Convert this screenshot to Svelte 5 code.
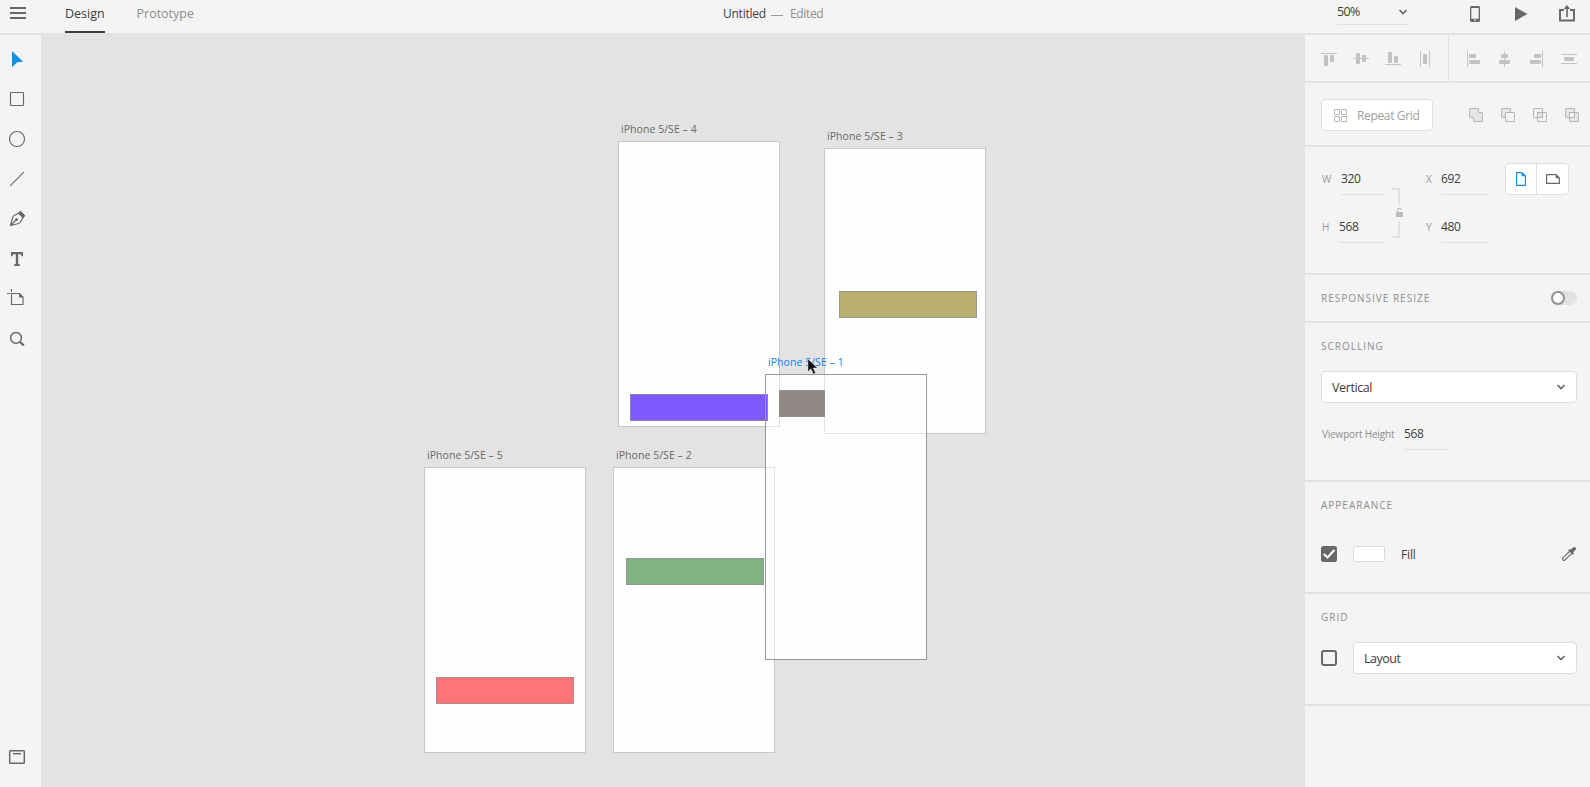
<script>
  const boards = [
    { n: 4, x: 577, y: 106 },
    { n: 3, x: 783, y: 113 },
    { n: 5, x: 383, y: 432 },
    { n: 2, x: 572, y: 432 }
  ];
  const bars = [
    { c: '#7e59ff', x: 589, y: 359, w: 138 },
    { c: '#b8ae70', x: 798, y: 256, w: 138 },
    { c: '#928684', x: 738, y: 355, w: 46 },
    { c: '#82b182', x: 585, y: 523, w: 138 },
    { c: '#ff7577', x: 395, y: 642, w: 138 }
  ];
</script>

{#snippet chevron()}
  <svg class="chev" width="10" height="8" viewBox="0 0 10 8"><path d="M1.5 2 5 5.5 8.5 2" fill="none" stroke="#686868" stroke-width="1.7" /></svg>
{/snippet}

<div class="app">
  <header>
    <svg class="burger" width="16" height="14" viewBox="0 0 16 14"><path d="M0 2h16M0 7h16M0 12h16" stroke="#686868" stroke-width="1.8" /></svg>
    <nav>
      <span class="tab on">Design</span>
      <span class="tab proto">Prototype</span>
    </nav>
    <div class="title"><b>Untitled</b><i></i><span>Edited</span></div>
    <div class="right">
      <div class="zoom"><span>50%</span>{@render chevron()}</div>
      <svg class="phone" width="10" height="16" viewBox="0 0 10 16"><path fill="#686868" fill-rule="evenodd" d="M1.5 0h7Q10 0 10 1.5v13Q10 16 8.5 16h-7Q0 16 0 14.500V1.500Q0 0 1.500 0ZM1.300 2v10.700h7.400V2ZM4.300 13.600v1.300h1.400v-1.300Z" /></svg>
      <svg class="play" width="13" height="14" viewBox="0 0 13 14"><path fill="#686868" d="M0 0 12.500 7 0 14Z" /></svg>
      <svg width="16" height="17" viewBox="0 0 16 17"><path d="M5 5H1v10.500h14V5h-4" fill="none" stroke="#686868" stroke-width="1.900" /><path d="M8 12V2" stroke="#686868" stroke-width="1.600" /><path d="M4.800 4 8 0l3.200 4Z" fill="#686868" /></svg>
    </div>
  </header>

  <main>
    <aside class="tools">
      <svg viewBox="0 0 24 24"><path fill="#1592e6" d="M7 4 18.200 14.800 12.300 15.200 7 20.200Z" /></svg>
      <svg viewBox="0 0 24 24"><rect x="5.500" y="5.500" width="13" height="13" rx=".8" class="ln" /></svg>
      <svg viewBox="0 0 24 24"><circle cx="12" cy="12" r="7.500" class="ln" /></svg>
      <svg viewBox="0 0 24 24"><path d="M5.200 18.800 18.800 5.200" class="ln" /></svg>
      <svg viewBox="0 0 24 24"><path d="M5.600 18.500 7.600 10.400Q8.200 9 9.600 8.300L13.700 6.300 18 10.600 15.700 14.600Q15 16 13.600 16.500ZM5.600 18.500 11 13" class="ln" /><circle cx="11.500" cy="12.500" r="1.500" fill="#686868" /><path fill="#686868" d="M13.200 6 15 4Q15.400 3.600 15.900 4L20 8.300Q20.400 8.800 20 9.200L18.200 11Z" /></svg>
      <svg viewBox="0 0 24 24"><path fill="#686868" d="M6 5h12v4.200h-1.500L16 7.200h-2.800v9.900l1.700.4V19H9.100v-1.500l1.700-.4V7.200H8L7.500 9.200H6Z" /></svg>
      <svg viewBox="0 0 24 24"><path d="M6.500 6.500H14.500L18 10V17.500H6.500ZM2 6.500h3M6.500 2v2.700" class="ln" /><path fill="#686868" d="M14 6.200 18.500 10.500H14Z" /></svg>
      <svg viewBox="0 0 24 24"><circle cx="11" cy="10.900" r="5.400" class="ln thick" /><path d="M15 14.900 18.800 18.500" stroke="#686868" stroke-width="2.200" /></svg>
      <svg class="last" viewBox="0 0 24 24"><rect x="4.700" y="5.700" width="14.600" height="12.600" rx=".8" class="ln thick" /><path d="M8 8.700h8" class="ln thick" /></svg>
    </aside>

    <section class="canvas">
      <div class="base"></div>
      {#each boards as b}
        <div class="board" style="left:{b.x}px;top:{b.y}px"></div>
        <span class="label" style="left:{b.x + 3}px;top:{b.y - 20}px">iPhone 5/SE – {b.n}</span>
      {/each}
      <div class="veil"></div>
      {#each bars as r}
        <div class="bar" style="left:{r.x}px;top:{r.y}px;width:{r.w}px;background-color:{r.c}"></div>
      {/each}
      <div class="board active"></div>
      <span class="label sel">iPhone 5/SE – 1</span>
      <svg class="cursor" width="11" height="17" viewBox="0 0 11 17"><path d="M1 1v12.500l3-2.800 2.300 5.300 2.200-1-2.300-5H10.300Z" fill="#111" stroke="#fff" stroke-opacity=".7" stroke-width=".5" /></svg>
    </section>

    <aside class="panel">
      <div class="sec align">
        <div class="grp">
          <svg viewBox="0 0 16 16"><path d="M0 2.500h16" class="g" /><rect x="3" y="4" width="4" height="11" rx="1" /><rect x="9" y="4" width="4" height="7" rx="1" /></svg>
          <svg viewBox="0 0 16 16"><path d="M0 7.500h16" class="g" /><rect x="3" y="2" width="4" height="11" rx="1" /><rect x="9" y="4" width="4" height="7" rx="1" /></svg>
          <svg viewBox="0 0 16 16"><path d="M0 13.500h16" class="g" /><rect x="3" y="1" width="4" height="11" rx="1" /><rect x="9" y="5" width="4" height="7" rx="1" /></svg>
          <svg viewBox="0 0 16 16"><path d="M3.500 0v16M12.500 0v16" class="g" /><rect x="6" y="3" width="4" height="10" rx="1" /></svg>
        </div>
        <div class="grp two">
          <svg viewBox="0 0 16 16"><path d="M2.500 0v16" class="g" /><rect x="4" y="3" width="7" height="4" rx="1" /><rect x="4" y="9" width="11" height="4" rx="1" /></svg>
          <svg viewBox="0 0 16 16"><path d="M7.500 0v16" class="g" /><rect x="4" y="3" width="7" height="4" rx="1" /><rect x="2" y="9" width="11" height="4" rx="1" /></svg>
          <svg viewBox="0 0 16 16"><path d="M13.500 0v16" class="g" /><rect x="5" y="3" width="7" height="4" rx="1" /><rect x="1" y="9" width="11" height="4" rx="1" /></svg>
          <svg viewBox="0 0 16 16"><path d="M0 3.500h16M0 12.500h16" class="g" /><rect x="3" y="6" width="10" height="4" rx="1" /></svg>
        </div>
      </div>

      <div class="sec repeat">
        <div class="rbtn">
          <svg width="13" height="13" viewBox="0 0 13 13"><g fill="none" stroke="#b5b5b5"><rect x=".5" y=".5" width="5" height="5" rx=".5" /><rect x="7.500" y=".5" width="5" height="5" rx=".5" /><rect x=".5" y="7.500" width="5" height="5" rx=".5" /><rect x="7.500" y="7.500" width="5" height="5" rx=".5" /></g></svg>
          <span>Repeat Grid</span>
        </div>
        <div class="bool">
          <svg viewBox="0 0 14 14"><path d="M1 .5h8q.5 0 .5.5v3.500h3.500q.5 0 .5.500v8q0 .5-.5.500h-8q-.5 0-.5-.5V9.500H1Q.5 9.500.5 9V1Q.5.5 1 .5Z" fill="#e5e5e5" /></svg>
          <svg viewBox="0 0 14 14"><path d="M4.500 9.500H1Q.5 9.500.5 9V1Q.5.5 1 .5H9q.5 0 .5.500v3.500" fill="#e5e5e5" /><rect x="4.500" y="4.500" width="9" height="9" rx=".5" fill="#f4f4f4" /></svg>
          <svg viewBox="0 0 14 14"><rect x=".5" y=".5" width="9" height="9" rx=".5" /><rect x="4.500" y="4.500" width="9" height="9" rx=".5" /><rect x="4.500" y="4.500" width="5" height="5" fill="#e5e5e5" /></svg>
          <svg viewBox="0 0 14 14"><rect x=".5" y=".5" width="9" height="9" rx=".5" fill="#e5e5e5" /><rect x="4.500" y="4.500" width="9" height="9" rx=".5" fill="#e5e5e5" /><rect x="4.500" y="4.500" width="5" height="5" fill="#f4f4f4" /></svg>
        </div>
      </div>

      <div class="sec dims">
        <div class="col">
          <div class="field"><em>W</em><span>320</span></div>
          <div class="field h"><em>H</em><span>568</span></div>
        </div>
        <svg class="link" width="12" height="50" viewBox="0 0 12 50"><path d="M0 1h7v16M7 33v16H0" fill="none" stroke="#e0e0e0" stroke-width="1.800" /><rect x="4" y="24" width="7" height="5" rx=".5" fill="#bcbcbc" /><path d="M5.500 22q.2-1.700 2-1.700 1.800 0 1.800 1.700M5.500 22.500V25" fill="none" stroke="#bcbcbc" stroke-width="1.200" /></svg>
        <div class="col xy">
          <div class="field"><em>X</em><span>692</span></div>
          <div class="field"><em>Y</em><span>480</span></div>
        </div>
        <div class="seg">
          <div><svg width="10" height="14" viewBox="0 0 10 14"><path d="M.6.600H6L9.400 4v9.400H.6Z" fill="none" stroke="#1592e6" stroke-width="1.200" /><path d="M5.700.3 9.700 4.300h-4Z" fill="#1592e6" /></svg></div>
          <div><svg width="14" height="10" viewBox="0 0 14 10"><path d="M.6.600H10L13.400 4v5.400H.6Z" fill="none" stroke="#686868" stroke-width="1.200" /><path d="M9.700.3 13.700 4.300h-4Z" fill="#686868" /></svg></div>
        </div>
      </div>

      <div class="sec resp">
        <h3>RESPONSIVE RESIZE</h3>
        <div class="toggle"><div class="knob"></div></div>
      </div>

      <div class="sec scroll">
        <h3>SCROLLING</h3>
        <div class="select"><span class="vert">Vertical</span>{@render chevron()}</div>
        <div class="view"><span class="cap">Viewport Height</span><span class="val">568</span></div>
      </div>

      <div class="sec appear">
        <h3>APPEARANCE</h3>
        <div class="row">
          <svg width="16" height="16" viewBox="0 0 16 16"><rect width="16" height="16" rx="2.500" fill="#686868" /><path d="M2.800 8 6.500 11.500 13.400 4" fill="none" stroke="#fff" stroke-width="2.100" /></svg>
          <div class="swatch"></div>
          <span class="fill">Fill</span>
          <svg class="drop" width="14" height="14" viewBox="0 0 14 14"><path d="M8 4 1.200 10.700Q0 12 1 13q1.100 1 2.400-.3L10 6" fill="none" stroke="#686868" stroke-width="1.100" /><path fill="#686868" d="M6.200 3.100 7.400 2l1.300.8L11 .6Q12.400-.4 13.500.6q1 1.200-.1 2.500L11.200 5.300l.8 1.400-1.200 1.100Z" /></svg>
        </div>
      </div>

      <div class="sec grid">
        <h3>GRID</h3>
        <div class="row">
          <svg width="16" height="16" viewBox="0 0 16 16"><rect x="1" y="1" width="14" height="14" rx="2" fill="none" stroke="#686868" stroke-width="2" /></svg>
          <div class="select"><span class="lay">Layout</span>{@render chevron()}</div>
        </div>
      </div>
    </aside>
  </main>
</div>

<style>
  :global(body) { margin: 0; }
  * { box-sizing: border-box; }
  svg { display: block; flex: none; }
  .app { width: 1590px; height: 787px; display: flex; flex-direction: column; overflow: hidden; background: #f4f4f4; color: #3d3d3d; font: 12px/16px 'Open Sans', 'Noto Sans', sans-serif; white-space: nowrap; }
  header { height: 35px; flex: none; border-bottom: 2px solid #e3e3e3; display: flex; }
  .burger { margin: 6px 0 0 10px; }
  nav { display: flex; width: 150px; margin-left: 39px; gap: 31.5px; }
  .tab { height: 33px; padding-top: 6px; color: #8d8d8d; font-size: 12.5px; }
  .tab.on { width: 40px; color: #3d3d3d; border-bottom: 2px solid #3d3d3d; }
  .title { display: flex; align-items: center; width: 102px; height: 16px; margin: 6px 0 0 auto; color: #8d8d8d; }
  .title b { font-weight: 400; color: #3d3d3d; width: 43px; letter-spacing: -.25px; }
  .title i { width: 12px; height: 1px; background: #999; margin: 2px 7px 0 5px; }
  .title span { letter-spacing: -.35px; }
  .right { margin-left: 512px; padding-right: 15px; display: flex; }
  .zoom { width: 71px; height: 25px; border-bottom: 1px solid #e0e0e0; display: flex; justify-content: space-between; padding-top: 4px; margin-right: 62px; font-size: 12.5px; letter-spacing: -.6px; }
  .zoom .chev { margin-top: 4px; }
  .phone { margin-top: 6px; }
  .play { margin: 7px 31px 0 35px; }
  .right > svg:last-child { margin-top: 5px; }

  main { flex: 1; display: flex; min-height: 0; }
  .tools { width: 41px; display: flex; flex-direction: column; padding: 12px 0 18px 5px; gap: 16px; }
  .tools svg { width: 24px; height: 24px; }
  .tools .last { margin-top: auto; }
  .ln { fill: none; stroke: #686868; stroke-width: 1.15; }
  .thick { stroke-width: 1.5; }

  .canvas { flex: 1; position: relative; background: #e3e3e3; overflow: hidden; }
  .board, .base, .veil { position: absolute; width: 162px; height: 286px; }
  .board { background: #fefefe; border: 1px solid #c8c8c8; }
  .base, .veil, .active { left: 724px; top: 339px; }
  .base { background: #fefefe; }
  .veil { background: rgba(254, 254, 254, .5); }
  .board.active { background: none; border-color: #999; }
  .bar { position: absolute; height: 27px; border: 1px solid rgba(145, 145, 145, .75); }
  .label { position: absolute; font-size: 10.5px; line-height: 16px; color: #686868; letter-spacing: .05px; }
  .sel { left: 727px; top: 319px; color: #1480ea; }
  .cursor { position: absolute; left: 766px; top: 323px; }

  .panel { width: 285px; flex: none; }
  .sec { border-bottom: 2px solid #e3e3e3; padding-left: 16px; padding-right: 13px; }
  .align { height: 48px; display: flex; }
  .grp { display: flex; gap: 16px; padding-top: 16px; width: 128px; border-right: 1px solid #e0e0e0; }
  .two { border: 0; padding-left: 16px; }
  .grp svg { width: 16px; height: 16px; fill: #c2c2c2; }
  .g { stroke: #c2c2c2; }
  .repeat { height: 64px; display: flex; align-items: flex-start; padding-top: 16px; }
  .rbtn { width: 112px; height: 32px; display: flex; align-items: center; gap: 10px; padding: 1px 0 0 12px; border: 1px solid #e0e0e0; border-radius: 4px; background: #fff; color: #a0a0a0; letter-spacing: -.35px; }
  .rbtn span { padding-top: 1px; }
  .bool { display: flex; gap: 18px; margin: 9px -2px 0 36px; }
  .bool svg { width: 14px; height: 14px; fill: none; stroke: #b5b5b5; }
  .dims { height: 128px; display: flex; align-items: flex-start; padding-top: 24px; }
  .field { width: 64px; height: 24px; margin-bottom: 24px; display: flex; }
  em { font-style: normal; font-size: 10px; line-height: 17px; color: #999; width: 20px; padding-left: 1px; }
  .h em { width: 18px; }
  .xy em { width: 16px; }
  .field span { flex: 1; border-bottom: 1px solid #e0e0e0; letter-spacing: -.4px; }
  .link { margin: 17px 0 0 7px; }
  .xy { margin-left: 21px; }
  .seg { display: flex; width: 64px; height: 32px; margin: -8px 0 0 16px; background: #fff; border: 1px solid #e0e0e0; border-radius: 4px; }
  .seg div { width: 30px; display: flex; align-items: center; justify-content: center; }
  .seg div + div { width: 32px; border-left: 1px solid #e0e0e0; }
  h3 { margin: 0; font-size: 10px; line-height: 16px; font-weight: 400; letter-spacing: 1px; color: #8d8d8d; }
  .resp { height: 48px; display: flex; justify-content: space-between; align-items: center; }
  .toggle { width: 26px; height: 14px; border-radius: 7px; background: #e2e2e2; }
  .knob { width: 14px; height: 14px; border: 2px solid #929292; border-radius: 50%; background: #fff; }
  .scroll { height: 159px; padding-top: 15px; }
  .select { flex: 1; height: 32px; display: flex; align-items: center; justify-content: space-between; padding: 0 10px; background: #fff; border: 1px solid #dcdcdc; border-radius: 4px; }
  .select span { padding-top: 2px; }
  .vert { letter-spacing: -.4px; }
  .lay { letter-spacing: -.5px; }
  .vert, .lay { font-size: 12.5px; }
  .scroll .select { margin-top: 17px; }
  .view { display: flex; margin-top: 23px; padding-left: 1px; }
  .cap { width: 82px; font-size: 10px; line-height: 16px; color: #8d8d8d; letter-spacing: -.17px; }
  .val { width: 45px; height: 24px; border-bottom: 1px solid #e0e0e0; letter-spacing: -.4px; }
  .appear { height: 112px; padding-top: 15px; }
  .row { display: flex; align-items: center; gap: 16px; }
  .appear .row { margin-top: 33px; height: 16px; }
  .fill { padding-top: 2px; letter-spacing: -.15px; }
  .swatch { width: 32px; height: 16px; background: #fff; border: 1px solid #dcdcdc; border-radius: 2px; }
  .drop { margin-left: auto; margin-right: 1px; }
  .grid { height: 112px; padding-top: 15px; }
  .grid .row { margin-top: 17px; }
</style>
